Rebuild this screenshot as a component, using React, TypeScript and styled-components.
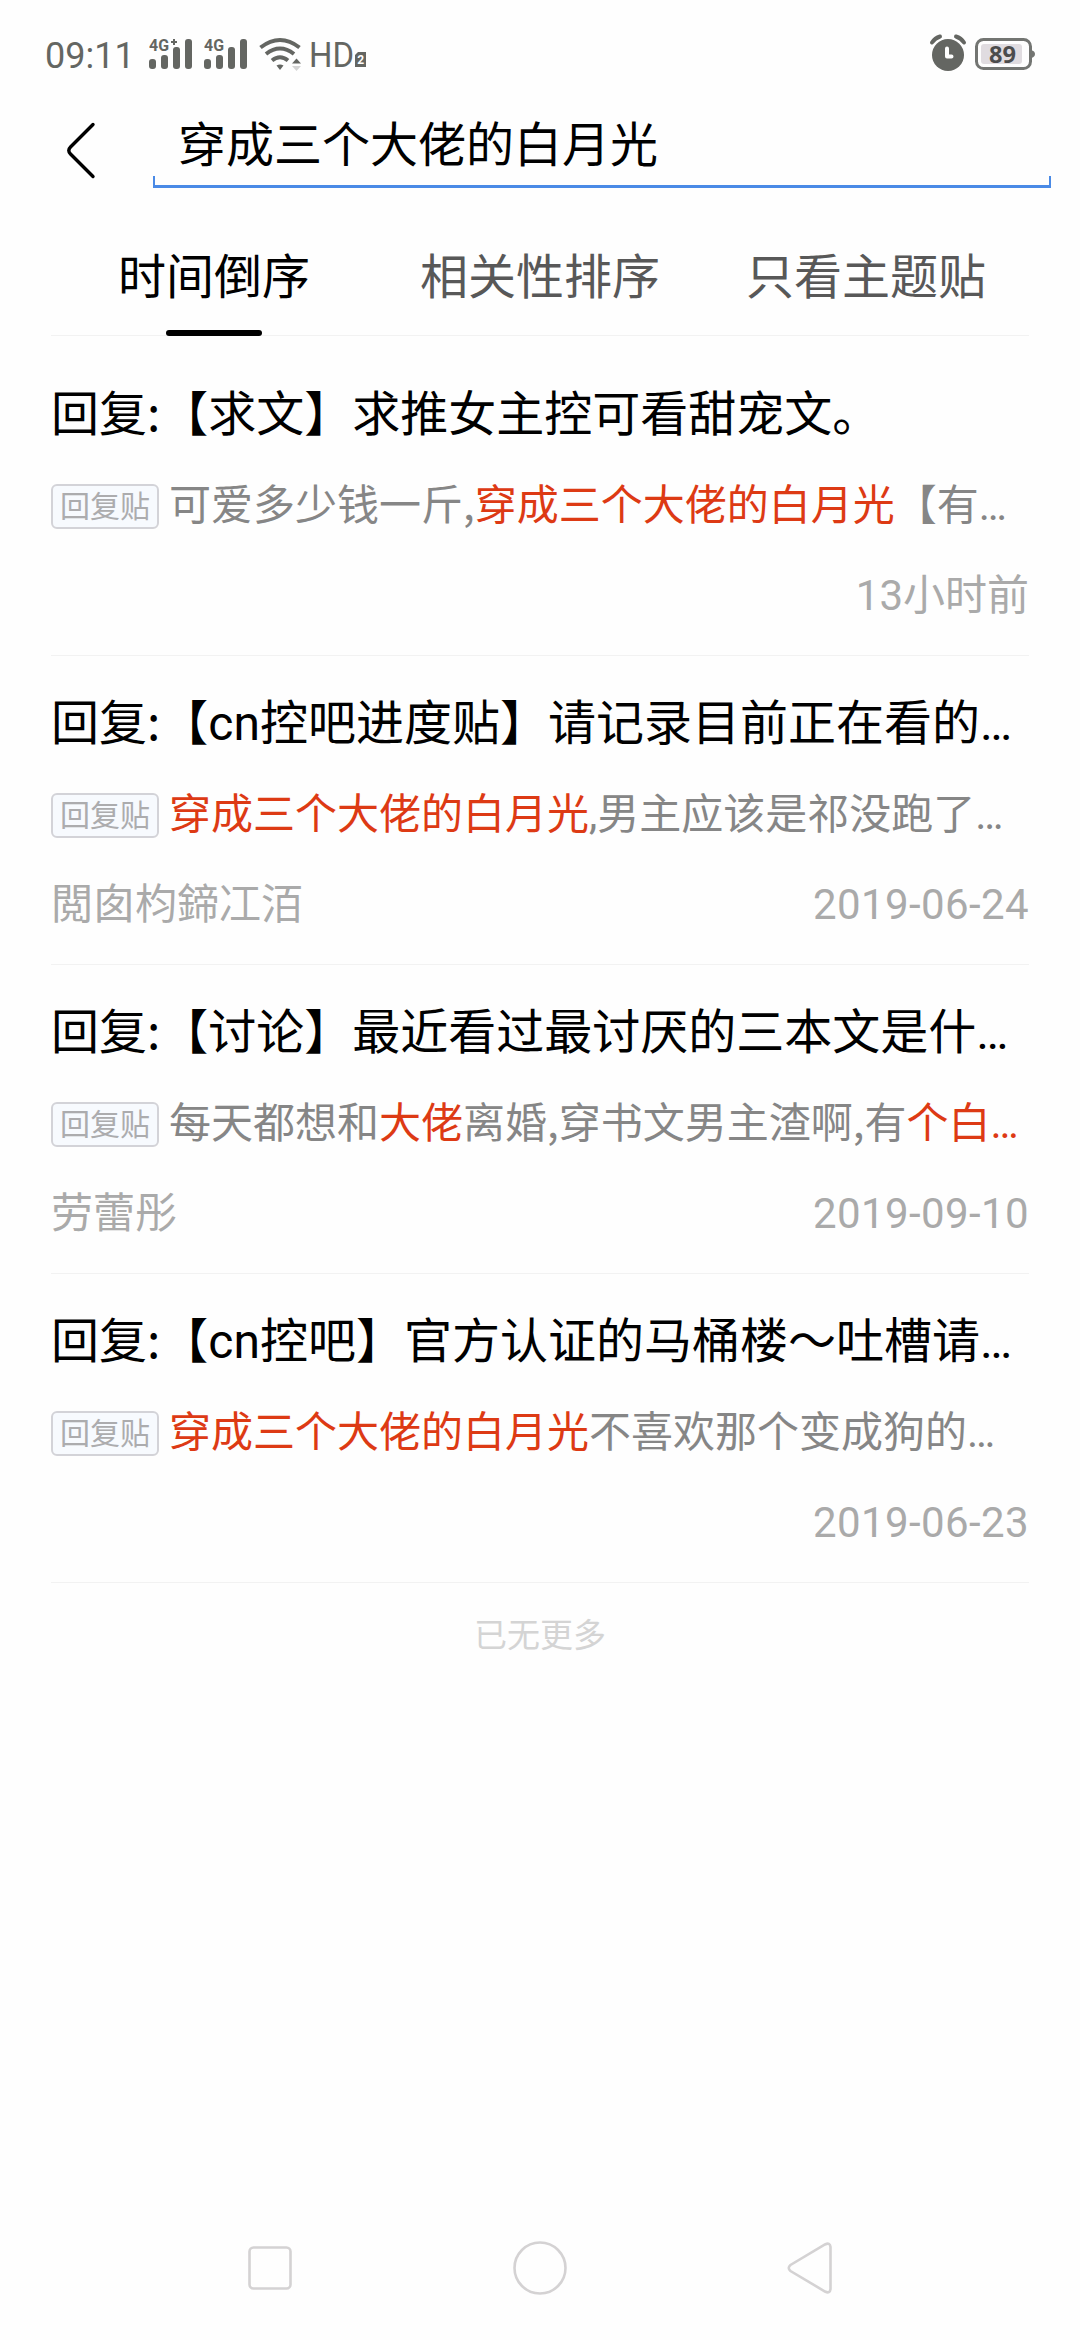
import React from 'react';
import styled, { createGlobalStyle } from 'styled-components';

const GlobalStyle = createGlobalStyle`
  * { box-sizing: border-box; }
  body {
    margin: 0;
    background: #fefefe;
    font-family: Roboto, "Noto Sans CJK SC", sans-serif;
  }
`;

const Screen = styled.div`
  display: flex;
  flex-direction: column;
  width: 1080px;
  height: 2340px;
  background: #fefefe;
  overflow: hidden;
`;

const StatusBar = styled.header`
  display: flex;
  justify-content: space-between;
  align-items: center;
  height: 108px;
  padding: 0 45px;
`;

const StatusGroup = styled.div`
  display: flex;
  align-items: center;
`;

const Clock = styled.span`
  width: 104px;
  padding-top: 4px;
  font-size: 36px;
  line-height: 44px;
  color: #646662;
`;

const TopBar = styled.div`
  display: flex;
  height: 80px;
`;

const BackButton = styled.button`
  display: flex;
  width: 153px;
  height: 80px;
  padding: 14px 0 0 64px;
  border: 0;
  background: none;
`;

const SearchField = styled.div`
  width: 898px;
  height: 80px;
  padding: 3px 0 0 25px;
  font-size: 48px;
  line-height: 70px;
  color: #000;
  background:
    linear-gradient(#4a8ae6, #4a8ae6) 0 100% / 100% 3px no-repeat,
    linear-gradient(#4a8ae6, #4a8ae6) 0 100% / 2px 12px no-repeat,
    linear-gradient(#4a8ae6, #4a8ae6) 100% 100% / 2px 12px no-repeat;
`;

const Tabs = styled.nav`
  display: flex;
  height: 148px;
  margin: 0 51px;
  border-bottom: 1px solid #f2f2f2;
`;

const Tab = styled.div<{ $active?: boolean }>`
  display: flex;
  flex: 1;
  flex-direction: column;
  justify-content: space-between;
  align-items: center;
  padding-top: 55px;
  font-size: 48px;
  line-height: 70px;
  white-space: nowrap;
  color: ${(p) => (p.$active ? '#000' : '#585858')};
`;

const TabMarker = styled.span`
  width: 96px;
  height: 6px;
  margin-bottom: -1px;
  border-radius: 3px;
  background: #000;
`;

const Results = styled.main`
  padding: 11px 51px 0;
`;

const Item = styled.article`
  height: 309px;
  padding-top: 34px;
  border-bottom: 1px solid #f2f2f2;
`;

const Title = styled.h2`
  margin: 0 0 27px;
  font-size: 48px;
  font-weight: 400;
  line-height: 68px;
  white-space: nowrap;
  color: #000;
`;

const Run = styled.span<{ $cjk?: boolean; $hit?: boolean }>`
  line-height: 1;
  ${(p) => p.$cjk && 'font-family: "Noto Sans CJK SC", sans-serif;'}
  ${(p) => p.$hit && 'color: #dd3a14;'}
`;

const Snippet = styled.div`
  display: flex;
  align-items: center;
  height: 60px;
  margin-bottom: 30px;
  font-size: 42px;
  line-height: 60px;
  white-space: pre;
  color: #868686;
`;

const Tag = styled.span`
  width: 108px;
  height: 45px;
  margin-right: 10px;
  border: 2px solid #d3d3d8;
  border-radius: 6px;
  background: #f7fafe;
  font-size: 30px;
  line-height: 41px;
  text-align: center;
  color: #acacae;
`;

const Meta = styled.div`
  display: flex;
  justify-content: space-between;
  font-size: 42px;
  line-height: 60px;
  color: #aaa;
`;

const PostDate = styled.time<{ $full: boolean }>`
  letter-spacing: ${(p) => (p.$full ? '0.4px' : '0')};
`;

const EndNote = styled.p`
  margin: 28px 0 0;
  text-align: center;
  font-size: 33px;
  line-height: 50px;
  color: #d4d4d4;
`;

const NavBar = styled.footer`
  display: flex;
  justify-content: center;
  align-items: center;
  height: 144px;
  margin-top: auto;
`;

const NavSlot = styled.div`
  display: flex;
  justify-content: center;
  width: 270px;
`;

const GREY = '#646662';

function SignalIcon({ plus }: { plus?: boolean }) {
  return (
    <svg width="55" height="34" viewBox="0 0 55 34">
      <g fill={GREY}>
        <rect x="0" y="22" width="7" height="10" rx="3" />
        <rect x="12" y="18" width="7" height="14" rx="3" />
        <rect x="24" y="10" width="7" height="22" rx="3" />
        <rect x="36" y="2" width="7" height="30" rx="3" />
        {plus && <path d="M24 2h2v2h2v2h-2v2h-2v-2h-2v-2h2z" />}
      </g>
      <text x="0" y="14" fontSize="16" fontWeight="700" fontFamily="Roboto" textLength="20" lengthAdjust="spacingAndGlyphs" fill={GREY}>
        4G
      </text>
    </svg>
  );
}

function WifiIcon() {
  return (
    <svg width="50" height="36" viewBox="0 0 50 36">
      <g fill="none" stroke={GREY} strokeWidth="4">
        <path d="M1.5 11.5Q21 -3.500 40.5 11.5" />
        <path d="M7 18Q21 7 35 18" />
        <path d="M13 24.500Q21 18 29 24.500" />
      </g>
      <path d="M17.5 29.500Q21 27.500 24.500 29.500L21 34z" fill={GREY} />
      <path d="M33 27.500l4.500-5 4.500 5z" fill={GREY} />
      <path d="M33 30h9l-4.500 5z" fill="#d4d4d4" />
    </svg>
  );
}

function HdIcon() {
  return (
    <svg width="64" height="52" viewBox="0 -8 64 52">
      <text x="0" y="31" fontSize="35.500" fontFamily="Roboto" textLength="45" lengthAdjust="spacingAndGlyphs" fill={GREY}>
        HD
      </text>
      <path d="M49 16h8v15h-11v-12z" fill={GREY} />
      <text x="48.200" y="28" fontSize="12" fontWeight="700" fontFamily="Roboto" fill="#fefefe">
        2
      </text>
    </svg>
  );
}

function AlarmIcon() {
  return (
    <svg width="46" height="40" viewBox="0 0 46 40">
      <circle cx="19" cy="21" r="16" fill={GREY} />
      <path d="M18 14.500v8h4.500" fill="none" stroke="#fefefe" strokeWidth="4" strokeLinecap="round" strokeLinejoin="round" />
      <path d="M3 8.500Q6 4 11 2.500M27 2.500Q32 4 35 8.500" fill="none" stroke={GREY} strokeWidth="4" strokeLinecap="round" />
    </svg>
  );
}

function BatteryIcon() {
  return (
    <svg width="60" height="34" viewBox="0 0 60 34">
      <rect x="1.500" y="2.500" width="54" height="29" rx="7" fill="none" stroke="#737572" strokeWidth="3" />
      <rect x="6" y="7" width="41" height="20" rx="3" fill="#e0dce0" />
      <path d="M56 13q4 1 4 4t-4 4z" fill="#737572" />
      <text x="27.500" y="25.500" textAnchor="middle" fontSize="24" fontWeight="700" fontFamily="Noto Sans" textLength="27" lengthAdjust="spacingAndGlyphs" fill="#4c4c4c">
        89
      </text>
    </svg>
  );
}

type Part = { text: string; hit?: boolean; cjk?: boolean };
type Post = { title: string; parts: Part[]; author: string; date: string };

const posts: Post[] = [
  {
    title: '【求文】求推女主控可看甜宠文。',
    parts: [
      { text: '可爱多少钱一斤,', cjk: true },
      { text: '穿成三个大佬的白月光', hit: true },
      { text: '【有…' },
    ],
    author: '',
    date: '13小时前',
  },
  {
    title: '【cn控吧进度贴】请记录目前正在看的…',
    parts: [{ text: '穿成三个大佬的白月光', hit: true }, { text: ',男主应该是祁没跑了…' }],
    author: '閲囱枃鍗冮洦',
    date: '2019-06-24',
  },
  {
    title: '【讨论】最近看过最讨厌的三本文是什…',
    parts: [
      { text: '每天都想和' },
      { text: '大佬', hit: true },
      { text: '离婚,穿书文男主渣啊,有', cjk: true },
      { text: '个白…', hit: true },
    ],
    author: '劳蕾彤',
    date: '2019-09-10',
  },
  {
    title: '【cn控吧】官方认证的马桶楼～吐槽请…',
    parts: [{ text: '穿成三个大佬的白月光', hit: true }, { text: '不喜欢那个变成狗的…' }],
    author: '',
    date: '2019-06-23',
  },
];

export default function App() {
  return (
    <>
      <GlobalStyle />
      <Screen>
        <StatusBar>
          <StatusGroup>
            <Clock>09:11</Clock>
            <SignalIcon plus />
            <SignalIcon />
            <WifiIcon />
            <HdIcon />
          </StatusGroup>
          <StatusGroup>
            <AlarmIcon />
            <BatteryIcon />
          </StatusGroup>
        </StatusBar>
        <TopBar>
          <BackButton aria-label="返回">
            <svg width="34" height="60" viewBox="0 0 34 60">
              <path d="M29 2.500L6.500 25Q3 28.500 6.500 32L29 54.500" fill="none" stroke="#000" strokeWidth="3.400" strokeLinecap="round" />
            </svg>
          </BackButton>
          <SearchField>穿成三个大佬的白月光</SearchField>
        </TopBar>
        <Tabs>
          <Tab $active>
            时间倒序
            <TabMarker />
          </Tab>
          <Tab>相关性排序</Tab>
          <Tab>只看主题贴</Tab>
        </Tabs>
        <Results>
          {posts.map((post) => (
            <Item key={post.title}>
              <Title>
                <Run $cjk>回复:</Run>
                {post.title}
              </Title>
              <Snippet>
                <Tag>回复贴</Tag>
                <span>
                  {post.parts.map((part) => (
                    <Run key={part.text} $hit={part.hit} $cjk={part.cjk}>
                      {part.text}
                    </Run>
                  ))}
                </span>
              </Snippet>
              <Meta>
                <span>{post.author}</span>
                <PostDate $full={post.date.includes('-')}>{post.date}</PostDate>
              </Meta>
            </Item>
          ))}
          <EndNote>已无更多</EndNote>
        </Results>
        <NavBar>
          <NavSlot>
            <svg width="44" height="44" viewBox="0 0 44 44">
              <rect x="1.500" y="1.500" width="41" height="41" rx="4" fill="none" stroke="#d4d2d3" strokeWidth="2.600" />
            </svg>
          </NavSlot>
          <NavSlot>
            <svg width="54" height="54" viewBox="0 0 54 54">
              <circle cx="27" cy="27" r="25.500" fill="none" stroke="#d4d2d3" strokeWidth="2.600" />
            </svg>
          </NavSlot>
          <NavSlot>
            <svg width="46" height="52" viewBox="0 0 46 52">
              <path d="M38 2.500Q43 0 43.500 5V47Q43 52 38 49.500L3.500 29Q0 26 3.500 23Z" fill="none" stroke="#d4d2d3" strokeWidth="2.600" />
            </svg>
          </NavSlot>
        </NavBar>
      </Screen>
    </>
  );
}
